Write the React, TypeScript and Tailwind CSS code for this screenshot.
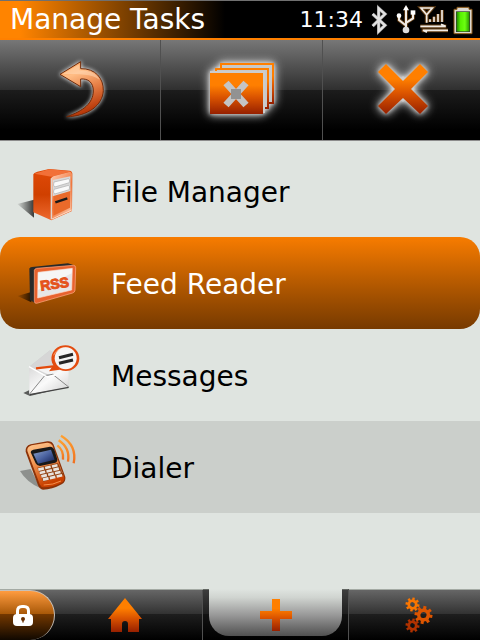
import type { ReactNode } from "react";

function Defs() {
  return (
    <svg className="absolute h-0 w-0" aria-hidden="true">
      <defs>
        <linearGradient id="flame" x1="0" y1="0" x2="0" y2="1">
          <stop offset="0.3" stopColor="#ff7f00" />
          <stop offset="0.6" stopColor="#d95200" />
          <stop offset="1" stopColor="#962000" />
        </linearGradient>
        <linearGradient id="arrow" x1="0" y1="0" x2="0.3" y2="1">
          <stop offset="0" stopColor="#ff9a48" />
          <stop offset="0.3" stopColor="#ffbd85" />
          <stop offset="0.6" stopColor="#e8834a" />
          <stop offset="1" stopColor="#b83808" />
        </linearGradient>
        <linearGradient id="side" x1="0" y1="0" x2="0" y2="1">
          <stop offset="0" stopColor="#e04a08" />
          <stop offset="0.5" stopColor="#d04000" />
          <stop offset="1" stopColor="#ee6a30" />
        </linearGradient>
        <linearGradient id="front" x1="0" y1="0" x2="0.6" y2="1">
          <stop offset="0" stopColor="#ffd0b8" />
          <stop offset="0.6" stopColor="#f27a40" />
          <stop offset="1" stopColor="#f8b896" />
        </linearGradient>
        <linearGradient id="paper" x1="0" y1="0" x2="1" y2="1">
          <stop offset="0" stopColor="#d8d8d8" />
          <stop offset="0.5" stopColor="#fafafa" />
          <stop offset="1" stopColor="#cfcfcf" />
        </linearGradient>
        <linearGradient id="shade" x1="0" y1="0" x2="1" y2="0">
          <stop offset="0" stopColor="#000" stopOpacity="0.05" />
          <stop offset="1" stopColor="#000" stopOpacity="0.75" />
        </linearGradient>
        <linearGradient id="phone" x1="0" y1="0" x2="0.3" y2="1">
          <stop offset="0" stopColor="#ffc890" />
          <stop offset="0.45" stopColor="#f49a58" />
          <stop offset="1" stopColor="#c84000" />
        </linearGradient>
        <linearGradient id="screen" x1="0" y1="0" x2="1" y2="1">
          <stop offset="0" stopColor="#8ea4cc" />
          <stop offset="0.5" stopColor="#4a62a0" />
          <stop offset="1" stopColor="#101c50" />
        </linearGradient>
        <linearGradient id="wave" x1="0" y1="0" x2="0" y2="1">
          <stop offset="0" stopColor="#ffa030" />
          <stop offset="1" stopColor="#f07020" />
        </linearGradient>
        <linearGradient id="cell" x1="0" y1="0" x2="1" y2="0">
          <stop offset="0" stopColor="#1e8a00" />
          <stop offset="0.3" stopColor="#58f000" />
          <stop offset="0.65" stopColor="#6cff10" />
          <stop offset="1" stopColor="#2a9a00" />
        </linearGradient>
      </defs>
    </svg>
  );
}

function StatusIcons() {
  return (
    <svg width="108" height="32" viewBox="390 12 324 96" role="img" aria-label="Bluetooth, USB, signal, battery full">
      <path d="M401 42L438 76L419 94V25L438 42L401 78" fill="none" stroke="#888" strokeWidth="10" />
      <path d="M401 42L438 76L419 94V25L438 42L401 78" fill="none" stroke="#e2e2e2" strokeWidth="7" />
      <g fill="none" stroke="#a06420" strokeWidth="11" opacity="0.6">
        <path d="M501 22V90M480 48V60L500 76M522 40V55L502 68" />
        <path d="M546 24H580L563 44ZM563 44V68" />
        <path d="M573 66V58M585 66V50M597 66V42M609 66V30M544 79H622M548 91H627" />
      </g>
      <g fill="none" stroke="#f0ebe6" strokeWidth="6">
        <path d="M501 25V90M480 48V60L500 76M522 40V55L502 68" />
        <path d="M546 24H580L563 44ZM563 44V68" strokeWidth="5" />
        <path d="M573 66V58M585 66V50M597 66V42M609 66V30" strokeWidth="5" />
        <path d="M544 79H620L606 73M627 91H552L564 97" strokeWidth="5" />
      </g>
      <path d="M501 15L510 31H492Z" fill="#fff" />
      <circle cx="480" cy="47" r="7" fill="#fff" />
      <path d="M515 31H529V44H515Z" fill="#fff" />
      <circle cx="501" cy="90" r="10" fill="#ddd" />
      <path d="M645 28H654V22H690V28H699V101H645Z" fill="#dcd8d0" stroke="#8a5818" strokeWidth="3" />
      <rect x="651" y="34" width="42" height="62" fill="#343c2c" />
      <rect x="653" y="36" width="38" height="58" fill="url(#cell)" />
    </svg>
  );
}

function BackIcon() {
  return (
    <svg width="60" height="66" viewBox="148 168 180 198" aria-hidden="true" className="drop-shadow-[0_0_2px_#fff]">
      <path
        d="M178 220L240 182V203C284 202 309 232 308 269C306 313 262 346 198 347C250 329 277 306 278 270C278 244 262 232 240 234V257Z"
        fill="url(#arrow)" stroke="#6c2808" strokeWidth="3" strokeLinejoin="round"
      />
      <path d="M186 219L236 190V208C268 208 289 219 297 236C270 218 240 220 186 219Z" fill="#ffe0c4" opacity="0.45" />
    </svg>
  );
}

const halo = "overflow-visible filter-[drop-shadow(0_0_2px_#ddd)_drop-shadow(0_0_5px_#ddd)]";

function CloseAllIcon() {
  return (
    <svg width="66" height="56" viewBox="-1 2 66 56" aria-hidden="true" className={halo}>
      <g fill="#c9c9c9" stroke="url(#flame)" strokeWidth="2">
        <rect x="12" y="4" width="52" height="39" />
        <rect x="7" y="9" width="52" height="39" />
      </g>
      <rect x="1" y="11" width="55" height="42" fill="#ccc" />
      <rect x="1" y="13" width="53" height="41" fill="url(#flame)" />
      <path d="M17 23L37 45M37 23L17 45" stroke="#c4c4c4" strokeWidth="7" />
      <rect x="22" y="29" width="10" height="10" fill="#929292" />
    </svg>
  );
}

function CloseIcon() {
  return (
    <svg width="52" height="52" viewBox="-2 1 52 52" aria-hidden="true" className={halo}>
      <path d="M17 26L26 16L35 26L26 36Z" fill="#ccc" stroke="#ccc" strokeWidth="4" />
      <path d="M9 1L26 18L43 1L51 9L34 26L51 43L43 51L26 35L9 51L1 43L18 26L1 9Z" fill="url(#flame)" />
    </svg>
  );
}

function TowerIcon() {
  return (
    <svg width="72" height="72" viewBox="12 0 216 216" aria-hidden="true">
      <path d="M22 147L72 134V188Z" fill="url(#shade)" />
      <path d="M70 58Q71 53 82 50L117 42L180 47Q188 50 187 58L186 168L124 196L70 172Z" fill="url(#side)" />
      <path d="M73 56L117 43L184 49L124 65Z" fill="#f27038" />
      <path d="M123 72Q124 66 130 64L180 50Q186 50 186 58L185 167L123 194Z" fill="url(#front)" />
      <path d="M130 77L180 66V158L130 182Z" fill="#ea6a2a" />
      <path d="M128 75L181 64V108L128 124Z" fill="#d9d9d9" />
      <g fill="#fafafa" stroke="#aaa" strokeWidth="2">
        <path d="M132 81L176 71Q180 73 178 83L134 96Q128 92 132 81Z" />
        <path d="M132 103L176 91Q180 93 178 104L134 117Q128 113 132 103Z" />
      </g>
      <path d="M136 142L172 130" stroke="#181818" strokeWidth="7" />
      <path d="M124 70V193" stroke="#dcd5d0" strokeWidth="4" />
      <path d="M126 192L185 165" stroke="#ffd6c0" strokeWidth="3" />
    </svg>
  );
}

function RssIcon() {
  return (
    <svg width="72" height="72" viewBox="12 -9 216 216" aria-hidden="true">
      <path d="M22 138L64 126V157Z" fill="url(#shade)" />
      <path d="M58 56Q59 52 66 51L174 40L192 46L76 160L60 150Z" fill="#292a2a" />
      <path d="M73 61Q74 56 80 55L190 46Q197 46 197 53L195 121Q194 127 188 129L80 160Q73 161 73 154Z" fill="#e8622e" stroke="#ffae88" strokeWidth="2" />
      <path d="M84 67L187 55L185 120L83 144Z" fill="#e6e6e6" stroke="#ffd9c8" strokeWidth="2" />
      <path d="M85 68L186 56L185 70L84 120Z" fill="#f6f6f6" />
      <text x="93" y="122" transform="rotate(-8 93 122)" fill="#e4531c" stroke="#e4531c" strokeWidth="3" fontSize="42" fontWeight="bold" fontFamily="Liberation Sans, sans-serif">RSS</text>
    </svg>
  );
}

function MailIcon() {
  return (
    <svg width="72" height="72" viewBox="12 12 216 216" aria-hidden="true">
      <path d="M40 174L60 164L180 154L60 183Z" fill="#000" opacity="0.6" />
      <path d="M58 95L120 46L174 88L176 157L58 178Z" fill="#cfcfcf" />
      <path d="M58 95L120 46L174 88L116 122Z" fill="#d6d6d6" />
      <path d="M78 98L150 90L168 104L118 120L86 105Z" fill="#f4f4f4" />
      <path d="M78 100L130 94" stroke="#e44a0c" strokeWidth="7" />
      <path d="M57 95L116 124L176 92L176 156L58 178Z" fill="url(#paper)" />
      <path d="M58 178L104 122L128 118L176 156" fill="none" stroke="#888" strokeWidth="3" />
      <path d="M57 95L113 126L135 120" fill="none" stroke="#fff" strokeWidth="4" />
      <path d="M59 179L176 157" stroke="#444" strokeWidth="4" />
      <path d="M117 109L130 91C118 72 125 43 151 33C180 23 209 43 208 71C207 99 177 116 149 104Z" fill="#e34c10" />
      <path d="M131 61C138 42 160 34 178 40" fill="none" stroke="#ff9a66" strokeWidth="3" />
      <circle cx="167" cy="70" r="33" fill="#f5f5f5" />
      <path d="M147 68L189 58M147 85L189 75" stroke="#252525" strokeWidth="9" />
    </svg>
  );
}

function PhoneIcon() {
  return (
    <svg width="72" height="72" viewBox="12 18 216 216" aria-hidden="true">
      <path d="M30 138L62 132L92 190Q50 172 30 138Z" fill="#000" opacity="0.3" />
      <path d="M47 80Q45 63 62 58L112 49Q126 48 131 59L166 156Q168 172 155 178Q126 194 99 194Q89 193 84 181Z" fill="#8c3208" />
      <path d="M52 78Q50 66 65 61L111 53Q122 52 127 61L163 157Q164 170 153 174Q126 187 101 187Q93 187 89 178Z" fill="url(#phone)" />
      <path d="M62 82Q62 76 70 74L120 65Q130 65 134 77L142 103Q143 112 133 114L90 123Q81 123 77 115Z" fill="#191919" />
      <path d="M70 86L123 74L134 104L84 116Z" fill="url(#screen)" />
      <path d="M82 128L144 114L161 150Q126 160 100 170Z" fill="#934414" />
      <g stroke="#e8e4de" strokeWidth="8" strokeDasharray="17 4">
        <path d="M85 134L145 120M89 144L151 130M94 154L156 140M99 164L160 150" />
      </g>
      <path d="M101 180Q130 180 153 168" fill="none" stroke="#f6904c" strokeWidth="3" />
      <g fill="none" stroke="url(#wave)" strokeWidth="7">
        <path d="M142 61Q162 76 159 104" />
        <path d="M146 46Q181 69 174 110" />
        <path d="M153 32Q202 61 191 115" />
      </g>
    </svg>
  );
}

function LockIcon() {
  return (
    <svg width="20" height="22" viewBox="0 0 20 22" aria-hidden="true">
      <path d="M4.500 10V6Q4.500 1.500 9 1.500H11Q15.500 1.500 15.500 6V10" fill="none" stroke="#fff" strokeWidth="3" />
      <rect x="0" y="9" width="20" height="12" rx="4" fill="#fff" />
      <circle cx="10" cy="14" r="2" fill="#6a3000" />
      <path d="M9.300 14H10.700V17.500H9.300Z" fill="#6a3000" />
    </svg>
  );
}

function HomeIcon() {
  return (
    <svg width="36" height="36" viewBox="0 0 36 36" aria-hidden="true">
      <path d="M18 1L35 22H32V35H21V27Q21 24 18 24Q15 24 15 27V35H4V22H1Z" fill="url(#flame)" />
    </svg>
  );
}

function PlusIcon() {
  return (
    <svg width="32" height="32" viewBox="0 0 32 32" aria-hidden="true">
      <path d="M12 0H20V12H32V20H20V32H12V20H0V12H12Z" fill="url(#flame)" />
    </svg>
  );
}

function Gear({ x, y, r, color }: { x: number; y: number; r: number; color: string }) {
  const angles = [0, 45, 90, 135, 180, 225, 270, 315];
  return (
    <g transform={`translate(${x} ${y}) rotate(10)`} fill={color}>
      {angles.map((a) => (
        <rect key={a} x={-r * 0.17} y={-r} width={r * 0.34} height={r * 0.5} transform={`rotate(${a})`} />
      ))}
      <circle r={r * 0.53} fill="none" stroke={color} strokeWidth={r * 0.38} />
    </g>
  );
}

function GearsIcon() {
  return (
    <svg width="28" height="36" viewBox="0 0 28 36" aria-hidden="true">
      <Gear x={7.5} y={7.5} r={7} color="#fb7600" />
      <Gear x={18.5} y={18} r={9} color="#dc5500" />
      <Gear x={7.5} y={28.5} r={7} color="#b03200" />
    </svg>
  );
}

const tasks: { name: string; icon: ReactNode; row: string }[] = [
  { name: "File Manager", icon: <TowerIcon />, row: "text-black" },
  { name: "Feed Reader", icon: <RssIcon />, row: "rounded-[20px] bg-linear-to-b from-[#f87c00] to-[#773a00] text-white" },
  { name: "Messages", icon: <MailIcon />, row: "text-black" },
  { name: "Dialer", icon: <PhoneIcon />, row: "bg-[#cbcfcb] text-black" },
];

const glossy = "bg-[linear-gradient(#777_0%,#2f2f2f_50%,#1c1c1c_50%,#000_90%)]";
const glossyNav = "bg-[linear-gradient(#666_0%,#333_47%,#1f1f1f_47%,#000_100%)]";

export default function App() {
  return (
    <div className="flex min-h-screen flex-col bg-[#dfe4e0] font-['DejaVu_Sans',sans-serif]">
      <Defs />
      <header className="flex h-10 items-center justify-between border-t border-b-2 border-t-[#707070] border-b-[#ff8000] bg-[linear-gradient(90deg,#ff8400_0,#ff8400_20px,#000_225px)] pr-[3px] pl-[10px]">
        <h1 className="text-[28px] leading-9 text-white">Manage Tasks</h1>
        <div className="flex items-center gap-[6px]">
          <time className="text-[22px] leading-8 text-white">11:34</time>
          <StatusIcons />
        </div>
      </header>

      <div role="toolbar" aria-label="Task actions" className={`flex h-[101px] border-b border-[#8c8c8c] ${glossy}`}>
        <button aria-label="Back" className="flex flex-[161] items-center justify-center border-r border-[#505050]">
          <BackIcon />
        </button>
        <button aria-label="Close all" className="flex flex-[162] items-center justify-center border-r border-[#505050]">
          <CloseAllIcon />
        </button>
        <button aria-label="Close" className="flex flex-[158] items-center justify-center">
          <CloseIcon />
        </button>
      </div>

      <main className="flex-1 pt-1">
        <ul>
          {tasks.map((t) => (
            <li key={t.name}>
              <button className={`flex h-[92px] w-full items-center gap-[25px] pl-[14px] text-left text-[28px] leading-9 ${t.row}`}>
                {t.icon}
                <span className="pt-1">{t.name}</span>
              </button>
            </li>
          ))}
        </ul>
      </main>

      <nav aria-label="Main" className={`flex h-[51px] border-t border-[#a4aaa4] ${glossyNav}`}>
        <button aria-label="Lock" className="flex w-[55px] items-center justify-center rounded-r-[25px] border-t border-r border-[#c8c0b8] bg-[linear-gradient(#ff9c40_0%,#a85808_47%,#743800_47%,#100800_100%)] pr-2">
          <LockIcon />
        </button>
        <button aria-label="Home" className="flex flex-[152] items-center justify-center border-r border-[#505050] pr-2">
          <HomeIcon />
        </button>
        <button aria-label="Tasks" aria-current="page" className="-mt-px flex flex-[145] border-r border-[#505050] bg-black/40 pr-[6px] pb-1 pl-[6px]">
          <span className="flex flex-1 items-center justify-center rounded-b-[20px] bg-[linear-gradient(#dfe4e0_0%,#d0d4d0_18%,#999_55%,#505050_100%)] pt-1">
            <PlusIcon />
          </span>
        </button>
        <button aria-label="Settings" className="flex flex-[134] items-center justify-center pl-2">
          <GearsIcon />
        </button>
      </nav>
    </div>
  );
}
